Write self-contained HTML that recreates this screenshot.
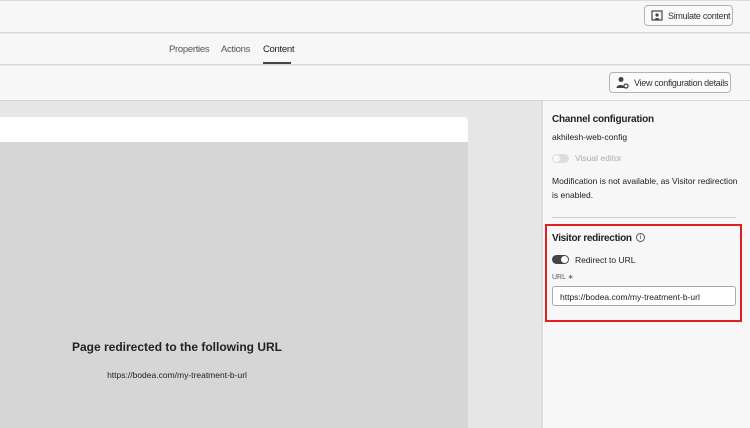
<!DOCTYPE html>
<html><head><style>
*{margin:0;padding:0;box-sizing:border-box}
body{width:750px;height:428px;overflow:hidden;background:#e6e6e6;font-family:"Liberation Sans",sans-serif;color:#222;position:relative}
.abs{position:absolute;white-space:nowrap}
.btn{position:absolute;border:1px solid #b3b3b3;border-radius:4px;background:#fafafa;font-size:9px;letter-spacing:-0.3px;color:#333;display:flex;align-items:center;gap:5px;padding-left:6px;white-space:nowrap}
.btn svg{flex-shrink:0}
</style></head><body>
<div class="abs" style="left:0;top:0;width:750px;height:33px;background:#f7f7f7;border-top:1px solid #ddd;border-bottom:1px solid #d8d8d8"></div>
<div class="btn" style="left:644px;top:5px;width:89px;height:21px">
<svg width="12" height="12" viewBox="0 0 12 12"><rect x="1" y="1" width="10" height="9" fill="none" stroke="#444" stroke-width="1.2"/><circle cx="6" cy="5" r="1.6" fill="#444"/><path d="M3.5 9.5c.5-2 4.5-2 5 0" fill="#444"/></svg>Simulate content</div>
<div class="abs" style="left:0;top:34px;width:750px;height:31px;background:#f7f7f7;border-bottom:1px solid #d8d8d8"></div>
<div class="abs" style="left:169px;top:44px;font-size:9.5px;letter-spacing:-0.3px;color:#555">Properties</div>
<div class="abs" style="left:221px;top:44px;font-size:9.5px;letter-spacing:-0.3px;color:#555">Actions</div>
<div class="abs" style="left:263px;top:44px;font-size:9.5px;letter-spacing:-0.3px;color:#222">Content</div>
<div class="abs" style="left:263px;top:62px;width:28px;height:2px;background:#444"></div>
<div class="abs" style="left:0;top:66px;width:750px;height:35px;background:#f7f7f7;border-bottom:1px solid #d8d8d8"></div>
<div class="btn" style="left:609px;top:72px;width:122px;height:21px">
<svg width="13" height="13" viewBox="0 0 13 13"><circle cx="5" cy="3.5" r="2.5" fill="#444"/><path d="M0.5 12c0-4 8-4 8 0z" fill="#444"/><circle cx="10" cy="10" r="2" fill="none" stroke="#444" stroke-width="1.3"/></svg>View configuration details</div>
<div class="abs" style="left:0;top:117px;width:468px;height:25px;background:#fff;border-radius:0 4px 0 0"></div>
<div class="abs" style="left:0;top:142px;width:468px;height:286px;background:#d6d6d6"></div>
<div class="abs" style="left:0;top:340px;width:354px;text-align:center;font-size:12px;font-weight:bold;color:#222">Page redirected to the following URL</div>
<div class="abs" style="left:0;top:370px;width:354px;text-align:center;font-size:8.5px;color:#222">https://bodea.com/my-treatment-b-url</div>
<div class="abs" style="left:541px;top:101px;width:209px;height:327px;background:#f7f7f7;border-left:2px solid #ddd"></div>
<div class="abs" style="left:552px;top:114px;font-size:10px;font-weight:bold;letter-spacing:-0.2px">Channel configuration</div>
<div class="abs" style="left:552px;top:132px;font-size:8.5px">akhilesh-web-config</div>
<div class="abs" style="left:552px;top:154px;width:17px;height:9px;border-radius:5px;background:#ddd"></div>
<div class="abs" style="left:553px;top:155px;width:7px;height:7px;border-radius:50%;background:#f7f7f7"></div>
<div class="abs" style="left:575px;top:153px;font-size:8.5px;color:#aaa">Visual editor</div>
<div class="abs" style="left:552px;top:174px;font-size:8.5px;line-height:14px">Modification is not available, as Visitor redirection<br>is enabled.</div>
<div class="abs" style="left:552px;top:217px;width:184px;height:1px;background:#ccc"></div>
<div class="abs" style="left:545px;top:224px;width:197px;height:98px;border:2px solid #e41e1e"></div>
<div class="abs" style="left:552px;top:233px;font-size:10px;font-weight:bold;letter-spacing:-0.3px">Visitor redirection</div>
<div class="abs" style="left:636px;top:233px;width:9px;height:9px;border:1px solid #555;border-radius:50%;font-size:6px;text-align:center;line-height:8px">i</div>
<div class="abs" style="left:552px;top:255px;width:17px;height:9px;border-radius:5px;background:#444"></div>
<div class="abs" style="left:561px;top:256px;width:7px;height:7px;border-radius:50%;background:#fff"></div>
<div class="abs" style="left:575px;top:255px;font-size:8.5px">Redirect to URL</div>
<div class="abs" style="left:552px;top:273px;font-size:7px;color:#555">URL ∗</div>
<div class="abs" style="left:552px;top:286px;width:184px;height:20px;border:1px solid #aaa;border-radius:3px;background:#fff;font-size:8.5px;padding:5px 0 0 7px">https://bodea.com/my-treatment-b-url</div>
</body></html>
